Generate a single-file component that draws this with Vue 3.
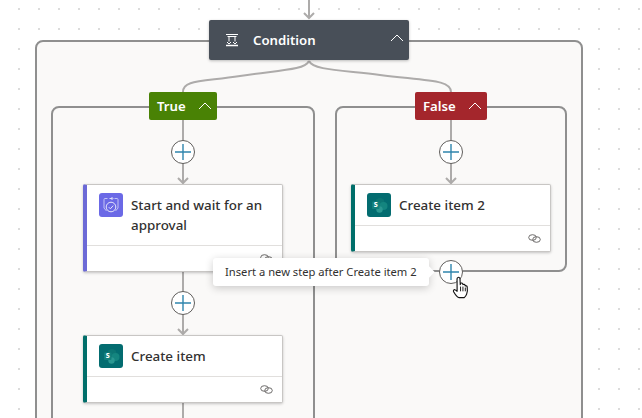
<template>
  <div class="canvas">
    <div class="scope scope-outer"></div>
    <div class="scope scope-true"></div>
    <div class="scope scope-false"></div>

    <svg class="wires" width="642" height="418" viewBox="0 0 642 418" fill="none">
      <!-- incoming arrow -->
      <path class="wire" d="M309 0V18M304 13l5 5 5-5" />
      <!-- condition branches -->
      <path class="wire" d="M309 61C305 70 280 70 240 76C200 82 183 80 183 92" />
      <path class="wire" d="M309 61C313 70 340 70 380 75C430 81 451 80 451 92" />
      <!-- true branch -->
      <path class="wire" d="M183 120V183M178 178l5 5 5-5" />
      <path class="wire" d="M183 272V334M178 329l5 5 5-5" />
      <path class="wire" d="M183 402V418" />
      <!-- false branch -->
      <path class="wire" d="M451 120V183M446 178l5 5 5-5" />
    </svg>

    <div class="condition">
      <svg class="cond-icon" width="14" height="14" viewBox="0 0 14 14" fill="none">
        <path d="M1 1.500h12M2.500 3.500h9M4 3.500v5M10 3.500v5" stroke="#fff" />
        <path d="M2 9l2 2 2-2M8 9l2 2 2-2" stroke="#fff" />
        <path d="M1 12.500h12" stroke="#fff" stroke-width="1.500" />
      </svg>
      <span class="cond-title">Condition</span>
      <svg class="chevron cond-chevron" width="14" height="8" viewBox="0 0 14 8" fill="none">
        <path d="M1 7l6-6 6 6" stroke="#fff" />
      </svg>
    </div>

    <div class="branch branch-true">
      <span>True</span>
      <svg class="chevron" width="14" height="8" viewBox="0 0 14 8" fill="none">
        <path d="M1 7l6-6 6 6" stroke="#fff" />
      </svg>
    </div>
    <div class="branch branch-false">
      <span>False</span>
      <svg class="chevron" width="14" height="8" viewBox="0 0 14 8" fill="none">
        <path d="M1 7l6-6 6 6" stroke="#fff" />
      </svg>
    </div>

    <button
      v-for="p in plusButtons"
      :key="p.id"
      class="plus"
      :style="{ left: `${p.x - 12}px`, top: `${p.y - 12}px` }"
    >
      <svg width="16" height="16" viewBox="0 0 16 16" fill="none">
        <path d="M8 0v16M0 8h16" stroke="#2f85ad" stroke-width="1.400" />
      </svg>
    </button>

    <div
      v-for="card in cards"
      :key="card.id"
      class="card"
      :class="card.kind"
      :style="{ left: `${card.x}px`, top: `${card.y}px` }"
    >
      <div class="card-head">
        <div class="card-icon">
          <svg v-if="card.kind === 'approval'" width="24" height="24" viewBox="0 0 24 24" fill="none">
            <path d="M8.500 5.500H6a1 1 0 0 0-1 1V15l2.500 3M15.500 5.500H18a1 1 0 0 1 1 1V15l-2.500 3" stroke="#c4c4f4" />
            <circle cx="12" cy="14" r="4.800" stroke="#e6e6fb" />
            <path d="M9.800 14.200l1.600 1.600 2.800-3.200" stroke="#e6e6fb" />
            <path d="M10.500 5.500h3M12.500 4l1.500 1.500-1.500 1.500" stroke="#dcdcf9" />
          </svg>
          <svg v-else width="24" height="24" viewBox="0 0 24 24">
            <circle cx="13" cy="9.500" r="4.500" fill="#0c7573" />
            <circle cx="16.500" cy="13" r="4" fill="#14857f" />
            <circle cx="12.500" cy="16.500" r="3.200" fill="#2a9791" />
            <rect x="5" y="8.500" width="7.500" height="7.500" rx="1" fill="#12807c" />
            <text x="8.750" y="14.300" class="sp-letter">s</text>
          </svg>
        </div>
        <div class="card-title">{{ card.title }}</div>
      </div>
      <div class="card-foot">
        <svg width="13" height="9" viewBox="0 0 13 9" fill="none">
          <ellipse cx="4.500" cy="3.500" rx="3.800" ry="2.800" stroke="#605e5c" stroke-width="0.900" />
          <ellipse cx="8.500" cy="5.500" rx="3.800" ry="2.800" stroke="#605e5c" stroke-width="0.900" />
        </svg>
      </div>
    </div>

    <div class="tooltip">Insert a new step after Create item 2</div>

    <svg class="hand" width="19" height="24" viewBox="0 0 20 25">
      <path
        d="M6 1.600c.9-.8 2.300-.2 2.400 1L8.700 9l.4-1.500c.8-.6 1.900-.3 2.200.6l.2.900c.7-.7 2-.4 2.300.6l.1.800c.8-.5 1.900-.2 2.100.9.400 2.600.2 5.400-.6 7.700-.5 1.500-1.500 2.800-2.500 3.600H7.500C5.500 22.500 3.600 19.800 1.700 16.500c-.6-1.100.2-2.400 1.400-2.200.8.100 1.500.8 2.300 1.600L5.300 3c0-.6.300-1.100.7-1.400z"
        fill="#fff"
        stroke="#111"
        stroke-width="1.200"
        stroke-linejoin="round"
      />
      <path d="M9 11v5M11.500 11v5M14 12v4" stroke="#111" fill="none" />
    </svg>
  </div>
</template>

<script setup>
const plusButtons = [
  { id: 'true-top', x: 183, y: 152 },
  { id: 'true-mid', x: 183, y: 303 },
  { id: 'false-top', x: 451, y: 152 },
  { id: 'false-end', x: 451, y: 272 }
]

const cards = [
  { id: 1, kind: 'approval', title: 'Start and wait for an approval', x: 83, y: 184 },
  { id: 2, kind: 'sharepoint', title: 'Create item', x: 83, y: 335 },
  { id: 3, kind: 'sharepoint', title: 'Create item 2', x: 351, y: 184 }
]
</script>

<style>
html,
body {
  margin: 0;
  overflow: hidden;
  background: #fff;
}
</style>

<style scoped>
.canvas {
  position: relative;
  width: 642px;
  height: 418px;
  overflow: hidden;
  font-family: "Noto Sans", "Open Sans", sans-serif;
  background-color: #fff;
  background-image: radial-gradient(circle at 1px 1px, #dcdcdc 1px, transparent 1.400px);
  background-size: 20px 20px;
  background-position: 18px 8px;
}

.scope {
  position: absolute;
  box-sizing: border-box;
  border: 2px solid #8f8f8f;
  border-radius: 8px;
  background: #faf9f8;
}

.scope-outer {
  left: 35px;
  top: 40px;
  width: 548px;
  height: 420px;
}

.scope-true {
  left: 51px;
  top: 106px;
  width: 264px;
  height: 340px;
}

.scope-false {
  left: 335px;
  top: 106px;
  width: 232px;
  height: 166px;
}

.wires {
  position: absolute;
  left: 0;
  top: 0;
}

.wire {
  stroke: #adabaa;
  stroke-width: 2;
}

.condition {
  position: absolute;
  left: 209px;
  top: 20px;
  width: 200px;
  height: 40px;
  box-sizing: border-box;
  padding: 0 5px 0 16px;
  display: flex;
  align-items: center;
  background: #484f58;
  border-radius: 2px;
  box-shadow: 0 1px 3px rgba(0, 0, 0, 0.25);
  color: #fff;
}

.cond-icon {
  flex: none;
}

.cond-title {
  margin-left: 14px;
  flex: 1;
  font-size: 13.2px;
  font-weight: 600;
}

.chevron {
  flex: none;
}

.cond-chevron {
  margin-bottom: 5px;
}

.branch {
  position: absolute;
  top: 92px;
  height: 28px;
  box-sizing: border-box;
  display: flex;
  align-items: center;
  justify-content: space-between;
  padding: 0 5px 0 8px;
  border-radius: 2px;
  color: #fff;
  font-size: 13.2px;
  font-weight: 600;
}

.branch-true {
  left: 149px;
  width: 68px;
  background: #498205;
}

.branch-false {
  left: 415px;
  width: 72px;
  background: #a4262c;
}

.plus {
  position: absolute;
  width: 24px;
  height: 24px;
  padding: 0;
  box-sizing: border-box;
  display: flex;
  align-items: center;
  justify-content: center;
  border: 1px solid #605e5c;
  border-radius: 50%;
  background: #fff;
}

.card {
  position: absolute;
  width: 200px;
  box-sizing: border-box;
  background: #fff;
  border: 1px solid #c8c6c4;
  border-left: 4px solid #006e6a;
  border-radius: 2px;
  box-shadow: 0 1px 3px rgba(0, 0, 0, 0.22);
}

.card.approval {
  border-left-color: #6b69d6;
}

.card-head {
  display: flex;
  align-items: flex-start;
  padding: 8px 12px;
  gap: 8px;
  border-bottom: 1px solid #e1dfdd;
  color: #323130;
}

.card-icon {
  flex: none;
  width: 24px;
  height: 24px;
  border-radius: 3px;
  background: #036c70;
}

.approval .card-icon {
  background: #6b69e6;
}

.card-title {
  font-size: 13.4px;
  line-height: 20px;
  padding: 2px 0;
  font-weight: 500;
}

.card-foot {
  height: 25px;
  box-sizing: border-box;
  display: flex;
  justify-content: flex-end;
  align-items: center;
  padding-right: 9px;
}

.sp-letter {
  font-family: "Noto Sans", sans-serif;
  font-size: 8px;
  font-weight: 700;
  fill: #fff;
  text-anchor: middle;
}

.tooltip {
  position: absolute;
  left: 213px;
  top: 258px;
  width: 216px;
  height: 28px;
  box-sizing: border-box;
  padding-left: 12px;
  line-height: 28px;
  font-size: 11.2px;
  color: #323130;
  white-space: nowrap;
  background: #fff;
  border-radius: 3px;
  box-shadow: 0 2px 8px rgba(0, 0, 0, 0.2);
}

.tooltip::after {
  content: "";
  position: absolute;
  left: 100%;
  top: 10px;
  margin-left: -4px;
  width: 8px;
  height: 8px;
  background: #fff;
  transform: rotate(45deg);
}

.hand {
  position: absolute;
  left: 452px;
  top: 276px;
}
</style>
